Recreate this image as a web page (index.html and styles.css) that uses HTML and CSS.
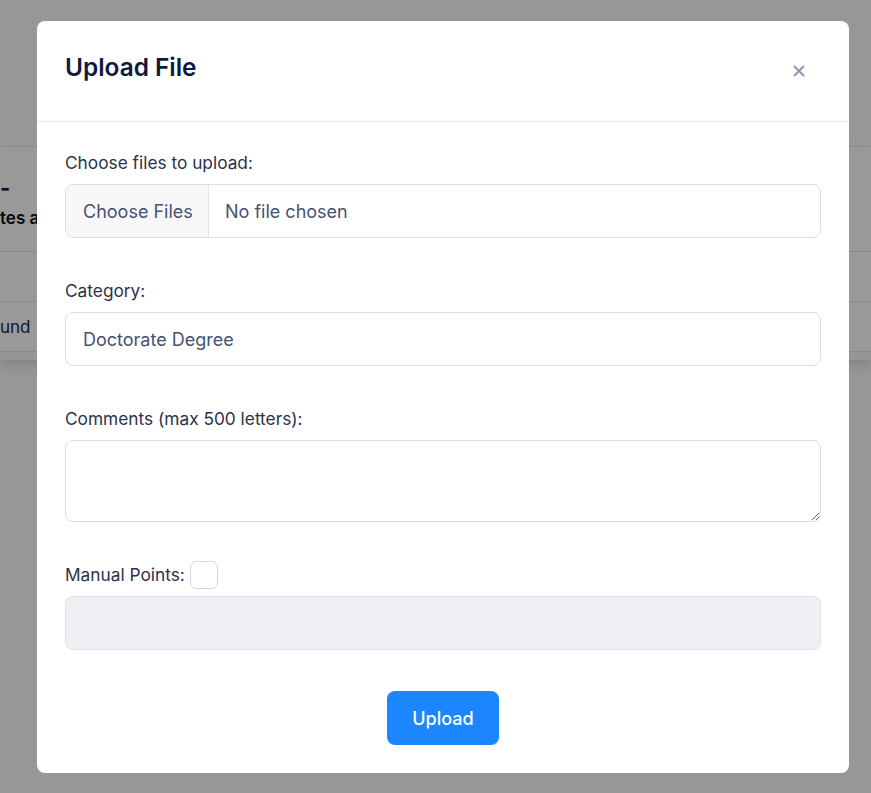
FILE: index.html
```html
<!DOCTYPE html>
<html lang="en">
<head>
<meta charset="utf-8">
<title>Upload File</title>
<link rel="stylesheet" href="styles.css">
</head>
<body>
<div class="page">
  <div class="card">
    <div class="card-head">
      <div class="card-title">-</div>
      <div class="card-sub">tes a</div>
    </div>
    <div class="card-row"></div>
    <div class="card-row"><span class="card-link">und</span></div>
    <div class="card-foot"></div>
  </div>
</div>

<div class="overlay">
  <div class="modal">
    <div class="modal-header">
      <h2 class="modal-title">Upload File</h2>
      <button class="close-btn" type="button" aria-label="Close">
        <svg width="12" height="12" viewBox="0 0 12 12"><path d="M1.5 1.5 10.5 10.5M10.5 1.5 1.5 10.5" stroke="#8d97ad" stroke-width="2" stroke-linecap="round"/></svg>
      </button>
    </div>
    <div class="modal-body">
      <div class="field">
        <label class="label">Choose files to upload:</label>
        <div class="file-input">
          <span class="file-btn">Choose Files</span>
          <span class="file-name">No file chosen</span>
        </div>
      </div>
      <div class="field">
        <label class="label">Category:</label>
        <div class="text-input">Doctorate Degree</div>
      </div>
      <div class="field field-comments">
        <label class="label">Comments (max 500 letters):</label>
        <textarea class="textarea"></textarea>
      </div>
      <div class="field field-last">
        <div class="check-row">
          <label class="label label-inline">Manual Points:</label>
          <input class="checkbox" type="checkbox">
        </div>
        <div class="text-input disabled"></div>
      </div>
      <div class="actions">
        <button class="upload-btn" type="button">Upload</button>
      </div>
    </div>
  </div>
</div>
</body>
</html>
```

FILE: styles.css
```css
* { box-sizing: border-box; }

html, body {
  margin: 0;
  padding: 0;
  height: 100%;
}

body {
  background: #fcfcfc;
  font-family: Inter, "Noto Sans", sans-serif;
  overflow: hidden;
}

/* background page */
.page {
  padding-top: 146px;
}

.card {
  background: #ffffff;
  border-top: 1px solid #e6e6ea;
  box-shadow: 0 6px 10px rgba(0, 0, 0, 0.12);
}

.card-head {
  height: 105px;
  padding-top: 28px;
  border-bottom: 1px solid #e3e4e8;
}

.card-title {
  font-size: 22px;
  font-weight: 700;
  color: #111827;
  line-height: 26px;
}

.card-sub {
  font-size: 17px;
  font-weight: 600;
  color: #0b1020;
  line-height: 26px;
  margin-top: 4px;
}

.card-row {
  height: 50px;
  border-bottom: 1px solid #e3e4e8;
  display: flex;
  align-items: center;
}

.card-link {
  font-size: 17px;
  color: #1c2550;
}

.card-foot {
  height: 8px;
  background: #fafafa;
}

/* modal */
.overlay {
  position: fixed;
  inset: 0;
  background: rgba(0, 0, 0, 0.4);
  padding: 21px 0 0 37px;
}

.modal {
  width: 812px;
  background: #ffffff;
  border-radius: 8px;
}

.modal-header {
  height: 101px;
  padding: 30px 38px 0 28px;
  border-bottom: 1px solid #e9eaee;
  display: flex;
  justify-content: space-between;
  align-items: flex-start;
}

.modal-title {
  margin: 0;
  font-size: 24.4px;
  line-height: 32px;
  font-weight: 600;
  color: #0f1a3d;
}

.close-btn {
  margin-top: 8px;
  width: 24px;
  height: 24px;
  padding: 0;
  border: 0;
  background: transparent;
  display: flex;
  align-items: center;
  justify-content: center;
}

.modal-body {
  padding: 29px 28px 28px 28px;
}

.field {
  margin-bottom: 41px;
}

.field-comments {
  margin-top: 1px;
}

.label {
  display: block;
  font-size: 17.3px;
  line-height: 24px;
  color: #2a3348;
  margin-bottom: 9px;
}

.file-input {
  height: 54px;
  border: 1px solid #dcdee6;
  border-radius: 8px;
  display: flex;
  align-items: stretch;
  overflow: hidden;
  font-size: 18px;
  color: #465271;
}

.file-btn {
  width: 143px;
  background: #f7f7f8;
  border-right: 1px solid #e1e3e9;
  padding-left: 17px;
  display: flex;
  align-items: center;
}

.file-name {
  padding-left: 16px;
  display: flex;
  align-items: center;
}

.text-input {
  height: 54px;
  border: 1px solid #dcdee6;
  border-radius: 8px;
  padding-left: 17px;
  display: flex;
  align-items: center;
  font-size: 18px;
  color: #465271;
}

.text-input.disabled {
  background: #eff0f3;
  border-color: #dfe1e7;
}

.textarea {
  display: block;
  width: 100%;
  height: 82px;
  border: 1px solid #dcdee6;
  border-radius: 8px;
  background: #ffffff;
  font-family: inherit;
  font-size: 18px;
  padding: 12px 16px;
  margin: 0;
  resize: vertical;
}

.field-last {
  margin-top: -2px;
  margin-bottom: 41px;
}

.check-row {
  display: flex;
  align-items: center;
  height: 28px;
  margin-bottom: 7px;
}

.label-inline {
  margin: 0;
  margin-right: 5px;
}

.checkbox {
  appearance: none;
  -webkit-appearance: none;
  margin: 0;
  width: 28px;
  height: 28px;
  border: 1px solid #d3d7e0;
  border-radius: 6px;
  background: #ffffff;
}

.actions {
  display: flex;
  justify-content: center;
}

.upload-btn {
  width: 112px;
  height: 54px;
  border: 0;
  border-radius: 8px;
  background: #1b86ff;
  color: #ffffff;
  font-family: inherit;
  font-size: 18px;
  font-weight: 500;
}
```
